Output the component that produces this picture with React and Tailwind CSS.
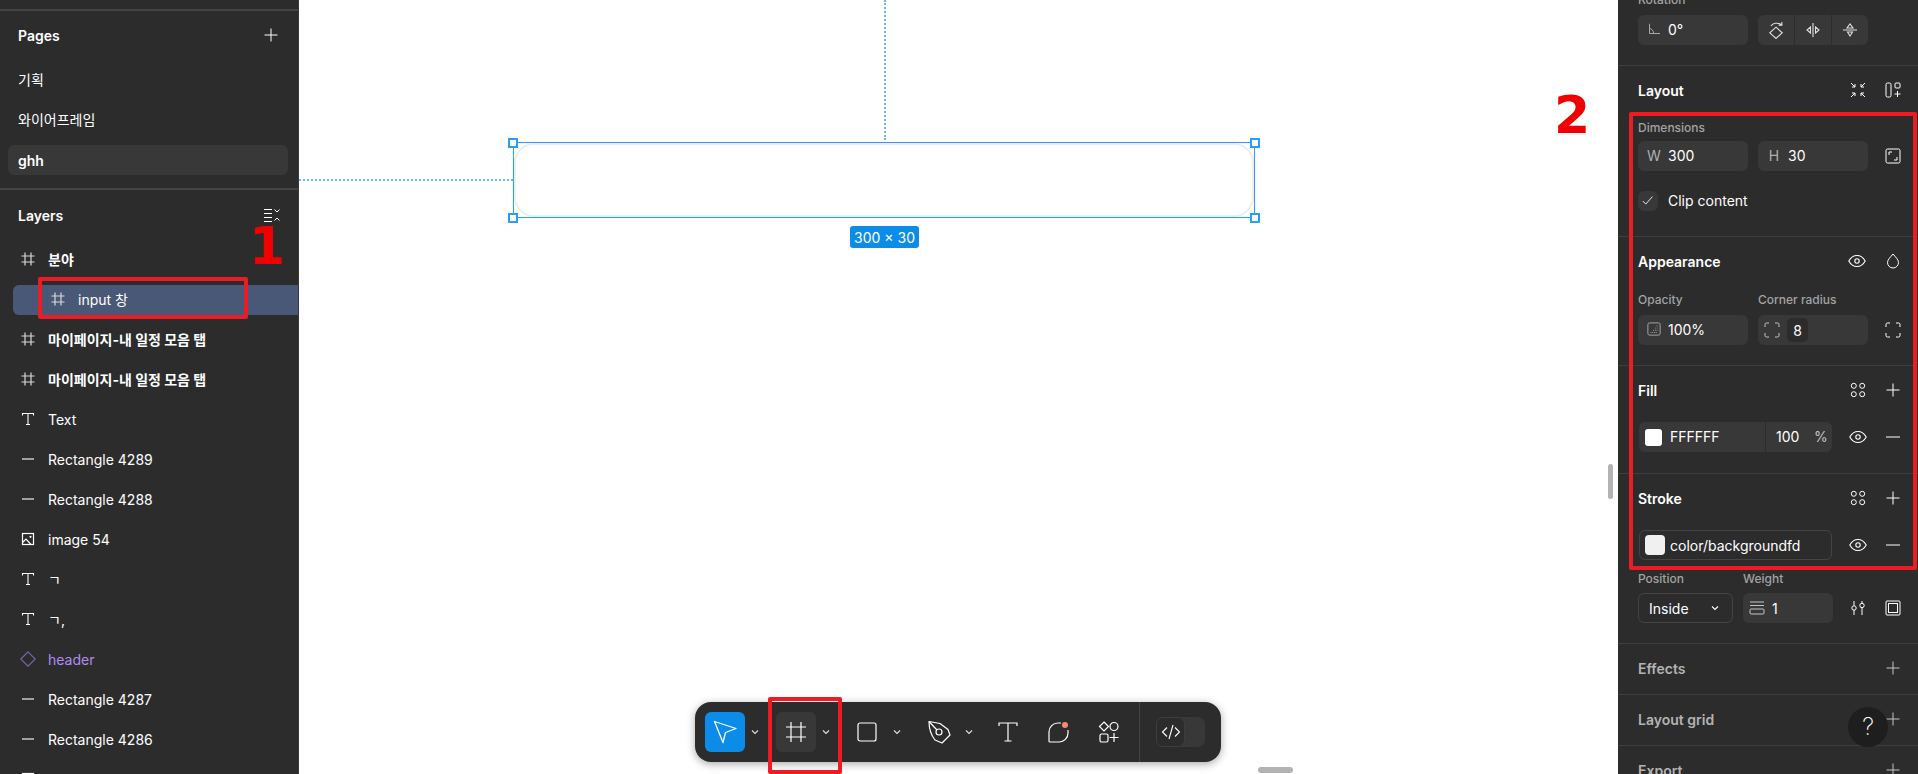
import React from "react";

const FONT = "font-['Inter','Noto_Sans_CJK_KR',sans-serif]";

function Icon({ size = 16, className = "", children }) {
  return (
    <svg
      width={size}
      height={size}
      viewBox="0 0 16 16"
      fill="none"
      stroke="currentColor"
      strokeWidth="1"
      className={"shrink-0 " + className}
    >
      {children}
    </svg>
  );
}

const Plus = ({ className }) => (
  <Icon className={className}>
    <path d="M8 1.500v13M1.500 8h13" />
  </Icon>
);
const Minus = () => (
  <Icon>
    <path d="M1 8h14" />
  </Icon>
);
const Hash = ({ className }) => (
  <svg width="14" height="14" viewBox="0 0 14 14" fill="none" stroke="#d8d8d8" strokeWidth="1.200" className={"shrink-0 " + className}>
    <path d="M4 .5v13M10 .5v13M.5 4h13M.5 10h13" />
  </svg>
);
const TextIcon = () => (
  <svg width="14" height="14" viewBox="0 0 14 14" fill="none" stroke="currentColor" strokeWidth="1.100" className="shrink-0">
    <path d="M1.500 3.500V1.500h11v2M7 1.500v11M5 12.500h4" />
  </svg>
);
const Line = () => (
  <svg width="14" height="14" viewBox="0 0 14 14" fill="none" className="shrink-0">
    <path d="M1 7h12" stroke="#a0a0a0" strokeWidth="2" />
  </svg>
);
const ImageIcon = () => (
  <svg width="14" height="14" viewBox="0 0 14 14" fill="none" stroke="currentColor" strokeWidth="1.200" className="shrink-0">
    <rect x="1.500" y="1.500" width="11" height="11" />
    <circle cx="9.500" cy="4.800" r="1.100" fill="currentColor" stroke="none" />
    <path d="M1.500 10.500 5 7l5 5.500" />
  </svg>
);
const Diamond = () => (
  <Icon className="text-[#7b61a8] -ml-px">
    <path d="M8 .8 15.200 8 8 15.200.8 8z" strokeWidth="1.200" />
  </Icon>
);
const Eye = () => (
  <svg width="18" height="18" viewBox="0 0 18 18" fill="none" stroke="currentColor" strokeWidth="1.100" className="shrink-0">
    <path d="M.8 9C2.800 5.400 5.600 3.500 9 3.500s6.200 1.900 8.200 5.500c-2 3.600-4.800 5.500-8.200 5.500S2.800 12.600.8 9z" />
    <circle cx="9" cy="9" r="2.200" />
  </svg>
);
const Styles = () => (
  <Icon>
    <circle cx="3.800" cy="3.800" r="2.500" />
    <circle cx="12.200" cy="3.800" r="2.500" />
    <circle cx="3.800" cy="12.200" r="2.500" />
    <circle cx="12.200" cy="12.200" r="2.500" />
  </Icon>
);
const Corners = ({ className }) => (
  <Icon className={className}>
    <path d="M1 5V2.500A1.500 1.500 0 0 1 2.500 1H5M11 1h2.500A1.500 1.500 0 0 1 15 2.500V5M15 11v2.500a1.500 1.500 0 0 1-1.500 1.500H11M5 15H2.500A1.500 1.500 0 0 1 1 13.500V11" />
  </Icon>
);
const Chevron = ({ className = "" }) => (
  <svg width="8" height="6" viewBox="0 0 8 6" fill="none" stroke="currentColor" strokeWidth="1.100" className={className}>
    <path d="M1 1.500 4 4.500 7 1.500" />
  </svg>
);

function LayerRow({ icon, name, bold, purple }) {
  return (
    <div className="h-10 flex items-center pl-[21px] pb-[2px] shrink-0">
      <span className="w-[27px] flex">{icon}</span>
      <span className={(bold ? "font-bold " : "") + (purple ? "text-[#b18bf0]" : "text-white")}>{name}</span>
    </div>
  );
}

function LeftPanel() {
  return (
    <aside className="w-[299px] h-full shrink-0 bg-[#2c2c2c] border-r border-[#383838] overflow-hidden text-[14px] text-white">
      <div className="mt-[9px] border-t-2 border-[#444] h-[50px] pl-[18px] pr-[19px] flex items-center justify-between">
        <span className="font-semibold">Pages</span>
        <Plus />
      </div>
      <div className="h-10 flex items-center pl-[18px] pt-px">기획</div>
      <div className="h-10 flex items-center pl-[18px] pt-px">와이어프레임</div>
      <div className="mx-2 mt-[6px] w-[280px] h-[30px] bg-[#383838] rounded-[6px] flex items-center pl-[10px] font-semibold">
        ghh
      </div>
      <div className="mt-[13px] border-t-2 border-[#444] h-[52px] pl-[18px] pr-[18px] flex items-center justify-between">
        <span className="font-semibold">Layers</span>
        <Icon>
          <path d="M0 2.500h8M0 6.500h8M0 10.500h8M0 14.500h8M10.500 2.500l2.500 2.500 2.500-2.500M10.500 13.500l2.500-2.500 2.500 2.500" />
        </Icon>
      </div>
      <LayerRow icon={<Hash />} name="분야" bold />
      <div className="h-10 flex items-center">
        <div className="ml-[13px] flex-1 h-[30px] bg-[#4a5878] rounded-l-[6px] flex items-center pl-[38px] pb-[2px]">
          <span className="w-[27px] flex">
            <Hash />
          </span>
          input 창
        </div>
      </div>
      <LayerRow icon={<Hash />} name="마이페이지-내 일정 모음 탭" bold />
      <LayerRow icon={<Hash />} name="마이페이지-내 일정 모음 탭" bold />
      <LayerRow icon={<TextIcon />} name="Text" />
      <LayerRow icon={<Line />} name="Rectangle 4289" />
      <LayerRow icon={<Line />} name="Rectangle 4288" />
      <LayerRow icon={<ImageIcon />} name="image 54" />
      <LayerRow icon={<TextIcon />} name="ㄱ" />
      <LayerRow icon={<TextIcon />} name="ㄱ," />
      <LayerRow icon={<Diamond />} name="header" purple />
      <LayerRow icon={<Line />} name="Rectangle 4287" />
      <LayerRow icon={<Line />} name="Rectangle 4286" />
      <LayerRow icon={<ImageIcon />} name="image 53" />
    </aside>
  );
}

function Field({ label, value, className = "w-[110px]" }) {
  return (
    <div className={"h-[30px] bg-[#383838] rounded-[6px] flex items-center pb-[2px] " + className}>
      <span className="w-[30px] flex justify-center text-[#b0b0b0] pl-[2px] shrink-0">{label}</span>
      <span>{value}</span>
    </div>
  );
}

function SectionHeader({ title, muted, children }) {
  return (
    <div className="h-[50px] pl-5 pr-[17px] pb-[2px] flex items-center justify-between">
      <span className={muted ? "font-semibold text-[#b3b3b3]" : "font-semibold"}>{title}</span>
      <div className="flex items-center gap-[19px]">{children}</div>
    </div>
  );
}

function SmallLabel({ children, className = "" }) {
  return <span className={"text-[12px] font-medium text-[#a3a3a3] " + className}>{children}</span>;
}

function RightPanel() {
  return (
    <aside className="w-[300px] h-full shrink-0 bg-[#2c2c2c] overflow-hidden text-[14px] text-white">
      <div className="-mt-2 px-5 h-[74px] border-b border-[#3d3d3d]">
        <div className="h-4 flex items-center">
          <SmallLabel>Rotation</SmallLabel>
        </div>
        <div className="mt-[7px] flex gap-[10px]">
          <Field
            label={
              <Icon size={12} className="text-[#b3b3b3]">
                <path d="M2 1v13h14M2 7.500c3 0 5.500 3 5.500 6.500" strokeWidth="1.200" />
              </Icon>
            }
            value="0°"
          />
          <div className="w-[110px] h-[30px] bg-[#383838] rounded-[6px] flex text-[#e0e0e0]">
            <div className="flex-1 flex items-center justify-center border-r border-[#2c2c2c]">
              <Icon size={18}>
                <path d="M8 5.500 13.500 10.500 8 15.500 2.500 10.500zM3.500 4.500C5 2 9.500 .8 13 3.500M13.200 .8v3h-3" strokeWidth="1" />
              </Icon>
            </div>
            <div className="flex-1 flex items-center justify-center border-r border-[#2c2c2c]">
              <Icon>
                <path d="M8 1v14M5.500 5v6L2 8zM10.500 5v6L14 8z" strokeWidth="1.100" />
              </Icon>
            </div>
            <div className="flex-1 flex items-center justify-center">
              <Icon>
                <path d="M1 8h14M5 6h6L8 2zM5.500 10h5L8 14z" strokeWidth="1.100" />
              </Icon>
            </div>
          </div>
        </div>
      </div>

      <div className="h-[171px] border-b border-[#3d3d3d]">
        <SectionHeader title="Layout">
          <Icon>
            <path d="M1 1l4 4M5 2v3H2M15 1l-4 4M11 2v3h3M1 15l4-4M5 14v-3H2M15 15l-4-4M11 14v-3h3" />
          </Icon>
          <Icon>
            <rect x="1" y="1" width="5" height="14" rx="1.500" />
            <rect x="10" y="1" width="5" height="5" rx="1" />
            <path d="M12.500 9v6M9.500 12h6" />
          </Icon>
        </SectionHeader>
        <div className="px-5 h-[25px] pb-[2px] flex items-center">
          <SmallLabel>Dimensions</SmallLabel>
        </div>
        <div className="pl-5 pr-[17px] flex items-center justify-between">
          <div className="flex gap-[10px]">
            <Field label="W" value="300" />
            <Field label="H" value="30" />
          </div>
          <Icon>
            <rect x="1" y="1" width="14" height="14" rx="1.500" />
            <path d="M4 7V4h3M12 9v3H9" />
          </Icon>
        </div>
        <div className="mt-5 pl-5 flex items-center gap-[10px]">
          <div className="w-5 h-5 rounded-[6px] bg-[#383838] flex items-center justify-center">
            <Icon size={14}>
              <path d="M2 8l3.500 3.500L13 3" />
            </Icon>
          </div>
          <span className="-mt-[2px]">Clip content</span>
        </div>
      </div>

      <div className="h-[129px] border-b border-[#3d3d3d]">
        <SectionHeader title="Appearance">
          <Eye />
          <Icon>
            <path d="M8 1c3 3.500 5.500 6 5.500 8.500a5.500 5.500 0 0 1-11 0C2.500 7 5 4.500 8 1z" />
          </Icon>
        </SectionHeader>
        <div className="px-5 flex h-[28px] pb-[2px] items-center">
          <SmallLabel className="w-[120px]">Opacity</SmallLabel>
          <SmallLabel>Corner radius</SmallLabel>
        </div>
        <div className="pl-5 pr-[17px] flex items-center justify-between">
          <div className="flex gap-[10px]">
            <Field
              label={
                <Icon size={14} className="text-[#b3b3b3]">
                  <rect x="1" y="1" width="14" height="14" rx="2" />
                  <path d="M4 12h8M7 9.500h5M9.500 7H12M11 4.500h1" strokeDasharray="1 1" />
                </Icon>
              }
              value="100%"
            />
            <div className="w-[110px] h-[30px] bg-[#383838] rounded-[6px] flex items-center pl-[6px]">
              <Corners className="text-[#c4c4c4]" />
              <div className="ml-[7px] w-[21px] h-6 bg-[#2c2c2c] rounded-[5px] flex items-center justify-center">8</div>
            </div>
          </div>
          <Corners />
        </div>
      </div>

      <div className="h-[108px] border-b border-[#3d3d3d]">
        <SectionHeader title="Fill">
          <Styles />
          <Plus />
        </SectionHeader>
        <div className="mt-[6px] pl-[21px] pr-[17px] flex items-center justify-between">
          <div className="w-[193px] h-[30px] bg-[#383838] rounded-[6px] flex items-center pl-[6px]">
            <div className="w-[17px] h-[17px] bg-white rounded-[3px]" />
            <span className="ml-2 w-[95px] -mt-[2px]">FFFFFF</span>
            <div className="w-px h-full bg-[#2c2c2c]" />
            <span className="ml-[10px] w-[38px] -mt-[2px]">100</span>
            <span className="text-[#c4c4c4] -mt-[2px]">%</span>
          </div>
          <div className="flex items-center gap-[18px]">
            <Eye />
            <Minus />
          </div>
        </div>
      </div>

      <div className="h-[170px] border-b border-[#3d3d3d]">
        <SectionHeader title="Stroke">
          <Styles />
          <Plus />
        </SectionHeader>
        <div className="mt-[6px] pl-[21px] pr-[17px] flex items-center justify-between">
          <div className="w-[193px] h-[30px] border border-[#444] rounded-[6px] flex items-center pl-[5px]">
            <div className="w-5 h-5 bg-[#f0f0f0] rounded-[4px]" />
            <span className="ml-[5px]">color/backgroundfd</span>
          </div>
          <div className="flex items-center gap-[18px]">
            <Eye />
            <Minus />
          </div>
        </div>
        <div className="px-5 flex h-[33px] pt-[4px] items-center">
          <SmallLabel className="w-[105px]">Position</SmallLabel>
          <SmallLabel>Weight</SmallLabel>
        </div>
        <div className="pl-5 pr-[17px] flex items-center justify-between">
          <div className="flex gap-[10px]">
            <div className="w-[95px] h-[30px] border border-[#444] rounded-[6px] flex items-center justify-between pl-[10px] pr-[13px]">
              Inside
              <Chevron />
            </div>
            <div className="w-[90px] h-[30px] bg-[#383838] rounded-[6px] flex items-center pl-[6px]">
              <Icon className="text-[#c4c4c4]">
                <path d="M1 2h14M1 5.500h14" />
                <rect x="1" y="9" width="14" height="5" rx="1" />
              </Icon>
              <span className="ml-[7px]">1</span>
            </div>
          </div>
          <div className="flex items-center gap-[19px]">
            <Icon>
              <path d="M4 1v4.500M4 10v5M12 1v2M12 8v7" />
              <circle cx="4" cy="8" r="2.200" />
              <circle cx="12" cy="5.500" r="2.200" />
            </Icon>
            <Icon>
              <rect x="1" y="1" width="14" height="14" rx="1" />
              <rect x="3.500" y="3.500" width="9" height="9" />
            </Icon>
          </div>
        </div>
      </div>

      <div className="h-[51px] border-b border-[#3d3d3d]">
        <SectionHeader title="Effects" muted>
          <Plus className="text-[#c4c4c4]" />
        </SectionHeader>
      </div>
      <div className="h-[51px] border-b border-[#3d3d3d]">
        <SectionHeader title="Layout grid" muted>
          <Plus className="text-[#c4c4c4]" />
        </SectionHeader>
      </div>
      <SectionHeader title="Export" muted>
        <Plus className="text-[#c4c4c4]" />
      </SectionHeader>
    </aside>
  );
}

function ToolChevron() {
  return (
    <span className="w-5 flex justify-center text-[#e0e0e0]">
      <Chevron />
    </span>
  );
}

function Toolbar() {
  return (
    <div className="absolute left-[396px] top-[702px] w-[526px] h-[60px] bg-[#2c2c2c] rounded-[16px] shadow-[0_2px_8px_rgba(0,0,0,0.35)] flex items-center pl-[10px] text-white">
      <div className="w-10 h-10 bg-[#0c8ce9] rounded-[6px] flex items-center justify-center">
        <svg width="24" height="24" viewBox="0 0 24 24" fill="none" stroke="currentColor" strokeWidth="1.300">
          <path d="M1.500 1.500 23 8.500 12.500 12.500 10 22.500z" strokeLinejoin="round" />
        </svg>
      </div>
      <ToolChevron />
      <div className="ml-[11px] w-10 h-10 bg-[#383838] rounded-[6px] flex items-center justify-center">
        <svg width="22" height="22" viewBox="0 0 22 22" fill="none" stroke="currentColor" strokeWidth="1.200">
          <path d="M6 1v20M16 1v20M1 6h20M1 16h20" />
        </svg>
      </div>
      <ToolChevron />
      <div className="ml-[11px] w-10 h-10 flex items-center justify-center">
        <svg width="20" height="20" viewBox="0 0 20 20" fill="none" stroke="currentColor" strokeWidth="1.200">
          <rect x="1" y="1" width="18" height="18" rx="2" />
        </svg>
      </div>
      <ToolChevron />
      <div className="ml-[12px] w-10 h-10 flex items-center justify-center">
        <svg width="24" height="24" viewBox="0 0 24 24" fill="none" stroke="currentColor" strokeWidth="1.200">
          <path d="M2 1.500 13 3.500 21 9.500 23 15 15 23 8 20C4 15 2 8 2 1.500z" strokeLinejoin="round" />
          <circle cx="12" cy="12" r="3" />
          <path d="M2 1.500 10 10" />
        </svg>
      </div>
      <ToolChevron />
      <div className="ml-[9px] w-10 h-10 flex items-center justify-center">
        <svg width="22" height="22" viewBox="0 0 22 22" fill="none" stroke="currentColor" strokeWidth="1.200">
          <path d="M2 5V2h18v3M11 2v18M7.500 20h7" />
        </svg>
      </div>
      <div className="ml-[11px] w-10 h-10 relative flex items-center justify-center">
        <svg width="22" height="22" viewBox="0 0 22 22" fill="none" stroke="currentColor" strokeWidth="1.200">
          <path d="M13 2H10A9 9 0 0 0 1 11v9a1 1 0 0 0 1 1h9a9 9 0 0 0 9-9V9" />
          <circle cx="17" cy="4" r="3" fill="#ff8577" stroke="none" />
        </svg>
      </div>
      <div className="ml-[10px] w-10 h-10 flex items-center justify-center">
        <svg width="22" height="22" viewBox="0 0 22 22" fill="none" stroke="currentColor" strokeWidth="1.200">
          <path d="M6 1 10.500 5.500 6 10 1.500 5.500z" />
          <circle cx="16" cy="5.500" r="4" />
          <rect x="2" y="13" width="8" height="8" rx="1.500" />
          <path d="M16 12v9M11.500 16.500h9" />
        </svg>
      </div>
      <div className="ml-[10px] w-px h-full bg-[#444]" />
      <div className="ml-4 w-[49px] h-[30px] bg-[#383838] rounded-[7px] flex">
        <div className="w-[29px] h-[30px] bg-[#2c2c2c] border border-[#3d3d3d] rounded-[7px] flex items-center justify-center">
          <svg width="20" height="16" viewBox="0 0 20 16" fill="none" stroke="currentColor" strokeWidth="1.100">
            <path d="M6 3.500 1.500 8 6 12.500M14 3.500 18.500 8 14 12.500M12 1 8 15" />
          </svg>
        </div>
      </div>
    </div>
  );
}

function Handle({ className }) {
  return <div className={"absolute w-[10px] h-[10px] bg-white border-2 border-[#2a9df4] " + className} />;
}

function Canvas() {
  return (
    <main className="relative flex-1 h-full bg-white overflow-hidden">
      <div className="absolute left-[585px] top-0 h-[140px] border-l-2 border-dotted border-[#6cb8f5]" />
      <div className="absolute left-0 top-[179px] w-[214px] border-t-2 border-dotted border-[#6cb8f5]" />
      <div className="absolute left-[214px] top-[142px] w-[742px] h-[76px] border-[1.5px] border-[#2a9df4]">
        <div className="w-full h-full border-2 border-[#eeeeee] rounded-[20px]" />
        <Handle className="-left-[6px] -top-[5px]" />
        <Handle className="-right-[6px] -top-[5px]" />
        <Handle className="-left-[6px] -bottom-[6px]" />
        <Handle className="-right-[6px] -bottom-[6px]" />
      </div>
      <div className="absolute left-[551px] top-[226px] w-[69px] h-[22px] bg-[#0c8ce9] rounded-[3px] text-white text-[14px] flex items-center justify-center">
        300 × 30
      </div>
      <Toolbar />
      <div className="absolute left-[959px] top-[767px] w-[35px] h-[6px] rounded-full bg-[#b3b3b3]" />
      <div className="absolute left-[1309px] top-[464px] w-[5px] h-[35px] rounded-full bg-[#b3b3b3]" />
    </main>
  );
}

function Annotations() {
  return (
    <>
      <div className="absolute left-[38px] top-[277px] w-[210px] h-[42px] border-4 border-[#ed1c24] rounded-[2px]" />
      <div className="absolute left-[1629px] top-[112px] w-[288px] h-[458px] border-4 border-[#ed1c24] rounded-[2px]" />
      <div className="absolute left-[768px] top-[697px] w-[74px] h-[77px] border-4 border-[#ed1c24] rounded-[2px]" />
      <span className="absolute left-[249px] top-[215px] text-[52px] leading-[62px] font-bold text-[#f00000] font-['DejaVu_Sans',sans-serif]">
        1
      </span>
      <span className="absolute left-[1554px] top-[84px] text-[52px] leading-[62px] font-bold text-[#f00000] font-['DejaVu_Sans',sans-serif]">
        2
      </span>
      <div className="absolute left-[1848px] top-[707px] w-10 h-10 rounded-full bg-[#1e1e1e] text-white text-[24px] font-extralight flex items-center justify-center">
        ?
      </div>
    </>
  );
}

export default function App() {
  return (
    <div className={"relative w-[1918px] h-[774px] flex overflow-hidden " + FONT}>
      <LeftPanel />
      <Canvas />
      <RightPanel />
      <Annotations />
    </div>
  );
}
